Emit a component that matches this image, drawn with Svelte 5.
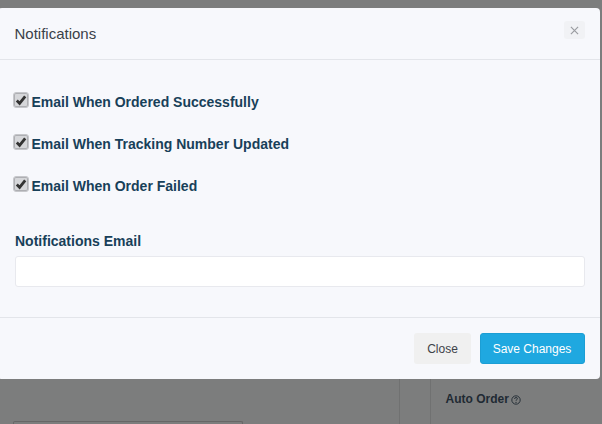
<script>
  const options = [
    'Email When Ordered Successfully',
    'Email When Tracking Number Updated',
    'Email When Order Failed'
  ];
</script>

<div class="page">
  <div class="under">
    <div class="left">
      <div class="field"></div>
    </div>
    <div class="gutter"></div>
    <div class="right">
      <b>Auto Order</b>
      <svg class="help" viewBox="0 0 10 10" width="10" height="10">
        <circle cx="5" cy="5" r="4.2" fill="none" stroke="#1f2a33" stroke-width="0.9" />
        <path d="M3.6 4q0-1.5 1.4-1.5t1.4 1.2q0 .7-.8 1.1t-.6 1" fill="none" stroke="#1f2a33" stroke-width="0.9" />
        <circle cx="5" cy="7.4" r="0.55" fill="#1f2a33" />
      </svg>
    </div>
  </div>
</div>

<div class="modal">
  <header>
    <h5>Notifications</h5>
    <button class="x" aria-label="Close">
      <svg viewBox="0 0 10 10" width="9" height="9">
        <path d="M1 1l8 8M9 1l-8 8" stroke="#9a9ca1" stroke-width="1.3" fill="none" />
      </svg>
    </button>
  </header>
  <div class="body">
    {#each options as opt}
      <label class="opt">
        <span class="box">
          <svg viewBox="0 0 12 12" width="12" height="12">
            <path d="M1.8 6.6l2.8 2.8 5.6-7" fill="none" stroke="#333" stroke-width="2.8" />
          </svg>
        </span>
        {opt}
      </label>
    {/each}
    <label class="email-label" for="email">Notifications Email</label>
    <input id="email" type="text" />
  </div>
  <footer>
    <button class="btn close">Close</button>
    <button class="btn save">Save Changes</button>
  </footer>
</div>

<style>
  :global(body) {
    margin: 0;
    background: #7c7d7d;
    font-family: "Liberation Sans", Arial, sans-serif;
  }
  .page {
    height: 424px;
    overflow: hidden;
    display: flex;
    flex-direction: column;
    justify-content: flex-end;
  }
  .under {
    display: flex;
    height: 45px;
  }
  .left {
    width: 399px;
    padding: 0 0 0 13px;
    box-sizing: border-box;
    display: flex;
    align-items: flex-end;
  }
  .field {
    width: 230px;
    height: 3px;
    border: 1px solid #666;
    border-bottom: 0;
    border-radius: 2px 2px 0 0;
    box-sizing: border-box;
  }
  .gutter {
    width: 32px;
    border-left: 1px solid #707171;
    border-right: 1px solid #707171;
    box-sizing: border-box;
  }
  .right {
    padding: 12px 0 0 14.5px;
    font-size: 12px;
    line-height: 16px;
    color: #1f2a33;
    display: flex;
    gap: 2px;
    align-items: flex-start;
  }
  .help {
    margin-top: 3.5px;
  }
  .modal {
    position: absolute;
    left: -2px;
    top: 8px;
    width: 602px;
    height: 371px;
    background: #f7f8fc;
    border-radius: 4px;
    display: flex;
    flex-direction: column;
    box-sizing: border-box;
  }
  header {
    height: 52px;
    box-sizing: border-box;
    border-bottom: 1px solid #e3e5ea;
    padding: 0 15px 0 16.5px;
    display: flex;
    justify-content: space-between;
    align-items: flex-start;
  }
  h5 {
    margin: 16px 0 0;
    font-size: 15px;
    line-height: 20px;
    font-weight: 400;
    color: #3a4149;
  }
  .x {
    margin-top: 13px;
    width: 21px;
    height: 18px;
    padding: 0;
    border: 0;
    border-radius: 3px;
    background: #f1f2f5;
    display: flex;
    align-items: center;
    justify-content: center;
  }
  .body {
    flex: 1;
    padding: 33px 15px 0 15px;
    display: flex;
    flex-direction: column;
  }
  .opt {
    display: flex;
    align-items: center;
    gap: 2.5px;
    height: 18px;
    margin-bottom: 24px;
    font-size: 14px;
    font-weight: 700;
    color: #184059;
  }
  .box {
    width: 14px;
    height: 14px;
    border: 1px solid #c6c7cb;
    border-radius: 3px;
    background: #d6d7da;
    box-shadow: inset 0 0 0 1px #aeafb3;
    display: flex;
    align-items: center;
    justify-content: center;
    flex: none;
    margin-top: -4px;
  }
  .email-label {
    margin: 13px 0 6px 2px;
    font-size: 14px;
    line-height: 18px;
    font-weight: 700;
    color: #184059;
  }
  input {
    margin-left: 2px;
    height: 31px;
    box-sizing: border-box;
    border: 1px solid #e8e9ee;
    border-radius: 3px;
    background: #fff;
  }
  footer {
    height: 62px;
    border-top: 1px solid #e3e5ea;
    padding: 15px 15px 0 0;
    box-sizing: border-box;
    display: flex;
    justify-content: flex-end;
    align-items: flex-start;
    gap: 9px;
  }
  .btn {
    height: 31px;
    border-radius: 3px;
    font-family: inherit;
    font-size: 12px;
    border: 1px solid transparent;
    padding: 0;
  }
  .close {
    width: 57px;
    background: #f0f0f0;
    color: #3d4248;
  }
  .save {
    width: 105px;
    padding-right: 1px;
    background: #1fa8e0;
    border-color: #1c9ed4;
    color: #fff;
  }
</style>
